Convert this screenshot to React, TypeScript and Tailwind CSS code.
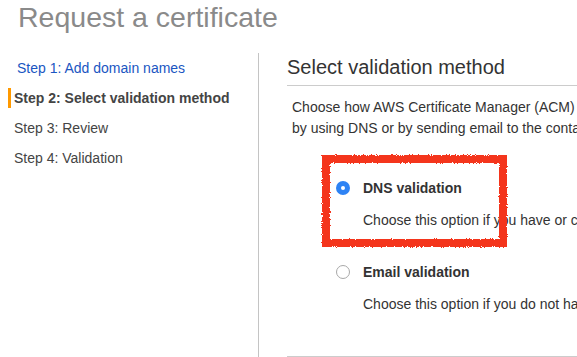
const steps = [
  { label: 'Step 1: Add domain names', state: 'done' },
  { label: 'Step 2: Select validation method', state: 'active' },
  { label: 'Step 3: Review', state: 'todo' },
  { label: 'Step 4: Validation', state: 'todo' },
];

function Radio({ checked }: { checked: boolean }) {
  return checked ? (
    <span className="flex h-[14px] w-[14px] items-center justify-center rounded-full bg-[#2e83f4]">
      <span className="h-[4px] w-[4px] rounded-full bg-white" />
    </span>
  ) : (
    <span className="h-[14px] w-[14px] rounded-full border border-[#a8a8a8] bg-white" />
  );
}

function Option({ checked, title, desc, className }: { checked: boolean; title: string; desc: string; className: string }) {
  return (
    <div className={className}>
      <div className="flex items-center leading-[20px]">
        <span className="ml-[44px] mr-[13px] flex">
          <Radio checked={checked} />
        </span>
        <span className="whitespace-nowrap text-[14px] font-bold text-[#333]">{title}</span>
      </div>
      <div className="mt-[12px] whitespace-nowrap pl-[71px] text-[14px] leading-[20px] text-[#333]">{desc}</div>
    </div>
  );
}

// red marker box drawn over the DNS option
function Highlight() {
  return (
    <svg className="pointer-events-none absolute left-[59px] top-[98px]" width="193" height="100" viewBox="0 0 193 100">
      <defs>
        <filter id="rough" x="-5%" y="-5%" width="110%" height="110%">
          <feTurbulence type="fractalNoise" baseFrequency="0.9" numOctaves="2" seed="3" />
          <feDisplacementMap in="SourceGraphic" scale="3" />
        </filter>
      </defs>
      <rect x="8" y="8" width="177" height="84" fill="none" stroke="#f4361c" strokeWidth="8" filter="url(#rough)" />
    </svg>
  );
}

export default function App() {
  return (
    <div
      className="flex h-[357px] w-[577px] flex-col overflow-hidden bg-white"
      style={{ fontFamily: '"Liberation Sans", Arial, sans-serif' }}
    >
      <h1 className="h-[53px] pl-[18px] pt-[1px] text-[28.5px] leading-[32px] text-[#8a8a8a]">
        Request a certificate
      </h1>

      <div className="flex flex-1">
        <nav className="w-[259px] shrink-0 border-r border-[#c4c4c4]">
          {steps.map((s) => (
            <div key={s.label} className="relative flex h-[30px] items-center text-[14px]">
              {s.state === 'active' ? (
                <span className="absolute left-[8px] top-[5px] h-[20px] w-[3px] bg-[#ff9900]" />
              ) : null}
              <span
                className={
                  s.state === 'done'
                    ? 'pl-[17px] text-[#1a56c2]'
                    : s.state === 'active'
                      ? 'pl-[14px] font-bold text-[#444]'
                      : 'pl-[14px] text-[#444]'
                }
              >
                {s.label}
              </span>
            </div>
          ))}
        </nav>

        <section className="relative min-w-0 flex-1 pl-[28px]">
          <h2 className="whitespace-nowrap border-b border-[#cccccc] pb-[4px] text-[20px] leading-[28px] text-[#333]">
            Select validation method
          </h2>

          <div className="pl-[5px]">
            <p className="mt-[11px] whitespace-nowrap text-[14px] leading-[21px] text-[#333]">
              Choose how AWS Certificate Manager (ACM) validates that you own or control the domains in your certificate request.
              <br />
              by using DNS or by sending email to the contacts of the domain owner.
            </p>

            <Option
              className="mt-[39px]"
              checked
              title="DNS validation"
              desc="Choose this option if you have or can obtain permission to modify the DNS configuration for the domains."
            />
            <Option
              className="mt-[32px]"
              checked={false}
              title="Email validation"
              desc="Choose this option if you do not have permission or cannot obtain permission to modify the DNS configuration."
            />
          </div>

          <div className="mt-[42px] border-b border-[#cccccc]" />

          <Highlight />
        </section>
      </div>
    </div>
  );
}
